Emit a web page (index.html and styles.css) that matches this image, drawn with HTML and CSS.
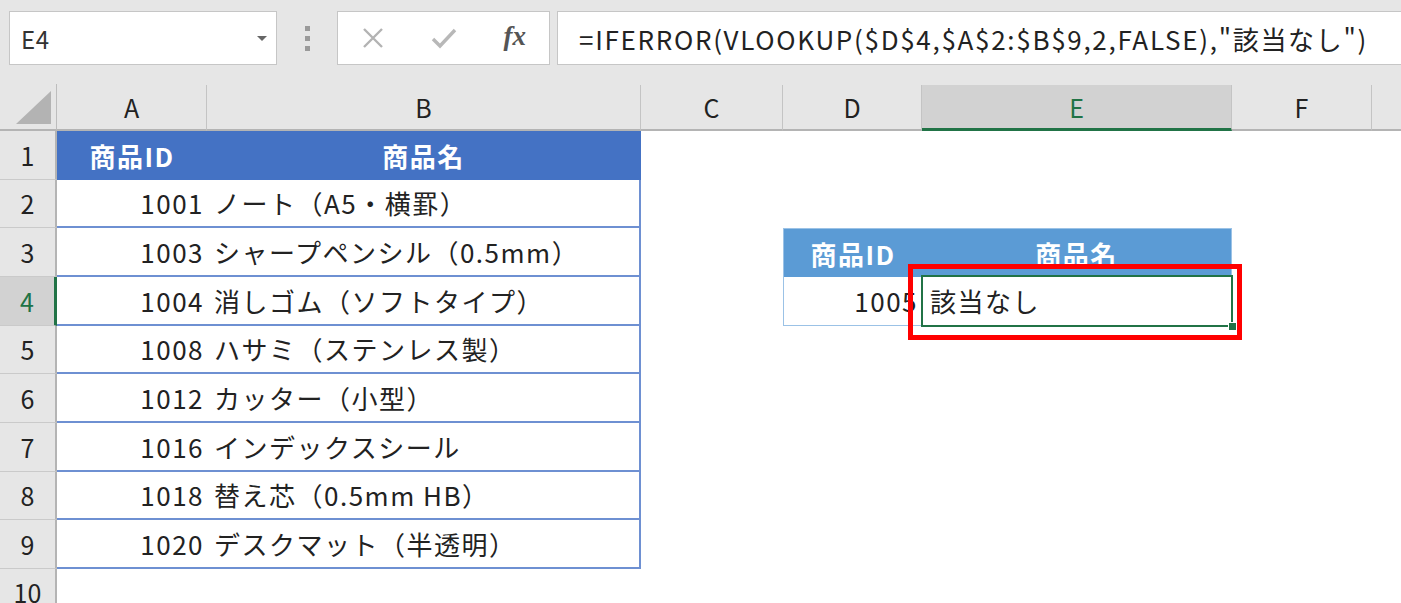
FILE: index.html
```html
<!DOCTYPE html>
<html lang="ja">
<head>
<meta charset="utf-8">
<title>Excel</title>
<link rel="stylesheet" href="styles.css">
</head>
<body>
<div class="app">
  <div class="toolbar">
    <div class="namebox"><span class="name">E4</span><span class="dd"></span></div>
    <div class="grip"><i></i><i></i><i></i></div>
    <div class="btns">
      <svg class="ico" width="24" height="24" viewBox="0 0 24 24"><path d="M3 3 L21 21 M21 3 L3 21" stroke="#b3b3b3" stroke-width="2.4" fill="none"/></svg>
      <svg class="ico" width="26" height="24" viewBox="0 0 26 24"><path d="M2 13 L9 20 L24 4" stroke="#b8b8b8" stroke-width="3.4" fill="none"/></svg>
      <span class="fx">fx</span>
    </div>
    <div class="formula">=IFERROR(VLOOKUP($D$4,$A$2:$B$9,2,FALSE),"該当なし")</div>
  </div>
  <div class="sheet">
    <div class="row colhdr">
      <div class="corner"><span class="tri"></span></div>
      <div class="ch">A</div><div class="ch">B</div><div class="ch">C</div><div class="ch">D</div><div class="ch sel">E</div><div class="ch">F</div><div class="ch last"></div>
    </div>
    <div class="row">
      <div class="rh">1</div>
      <div class="th">商品ID</div><div class="th">商品名</div>
      <div></div><div></div><div></div><div></div><div></div>
    </div>
    <div class="row">
      <div class="rh">2</div>
      <div class="id">1001</div><div class="nm">ノート（A5・横罫）</div>
      <div></div><div></div><div></div><div></div><div></div>
    </div>
    <div class="row">
      <div class="rh">3</div>
      <div class="id">1003</div><div class="nm">シャープペンシル（0.5mm）</div>
      <div></div><div class="th2 d">商品ID</div><div class="th2 e">商品名</div><div></div><div></div>
    </div>
    <div class="row">
      <div class="rh sel">4</div>
      <div class="id">1004</div><div class="nm">消しゴム（ソフトタイプ）</div>
      <div></div><div class="v2">1005</div><div class="res">該当なし<span class="selbox"><span class="handle"></span></span><span class="redbox"></span></div><div></div><div></div>
    </div>
    <div class="row">
      <div class="rh">5</div>
      <div class="id">1008</div><div class="nm">ハサミ（ステンレス製）</div>
      <div></div><div></div><div></div><div></div><div></div>
    </div>
    <div class="row">
      <div class="rh">6</div>
      <div class="id">1012</div><div class="nm">カッター（小型）</div>
      <div></div><div></div><div></div><div></div><div></div>
    </div>
    <div class="row">
      <div class="rh">7</div>
      <div class="id">1016</div><div class="nm">インデックスシール</div>
      <div></div><div></div><div></div><div></div><div></div>
    </div>
    <div class="row">
      <div class="rh">8</div>
      <div class="id">1018</div><div class="nm">替え芯（0.5mm HB）</div>
      <div></div><div></div><div></div><div></div><div></div>
    </div>
    <div class="row">
      <div class="rh">9</div>
      <div class="id">1020</div><div class="nm">デスクマット（半透明）</div>
      <div></div><div></div><div></div><div></div><div></div>
    </div>
    <div class="row tail">
      <div class="rh">10</div>
      <div></div><div></div><div></div><div></div><div></div><div></div><div></div>
    </div>
  </div>
</div>
</body>
</html>
```
FILE: styles.css
```css
* { box-sizing: border-box; }
html, body { margin: 0; padding: 0; }
body {
  width: 1401px;
  height: 603px;
  overflow: hidden;
  background: #e6e6e6;
  font-family: "Noto Sans CJK JP", "Noto Sans", sans-serif;
  color: #222;
}
.app { display: flex; flex-direction: column; height: 603px; }

/* toolbar */
.toolbar {
  height: 84px;
  flex: none;
  display: flex;
  align-items: flex-start;
  padding: 11px 0 0 9px;
  background: #e6e6e6;
}
.namebox {
  width: 268px;
  height: 54px;
  background: #fff;
  border: 1px solid #c6c6c6;
  display: flex;
  align-items: center;
  justify-content: space-between;
  padding: 0 9px 0 11px;
}
.name { font-size: 24px; color: #333; letter-spacing: 0.5px; }
.dd {
  width: 0; height: 0;
  border-left: 5px solid transparent;
  border-right: 5px solid transparent;
  border-top: 5px solid #666;
}
.grip {
  width: 60px;
  height: 54px;
  display: flex;
  flex-direction: column;
  align-items: center;
  justify-content: center;
  gap: 5px;
}
.grip i { display: block; width: 5px; height: 5px; background: #9a9a9a; }
.btns {
  width: 213px;
  height: 54px;
  background: #fff;
  border: 1px solid #c6c6c6;
  display: flex;
  align-items: center;
  padding: 0 23px 0 23px;
  justify-content: space-between;
}
.fx {
  font-family: "Liberation Serif", serif;
  font-style: italic;
  font-weight: bold;
  font-size: 27px;
  color: #555;
  margin-top: -4px;
}
.formula {
  margin-left: 7px;
  flex: 1;
  height: 54px;
  background: #fff;
  border: 1px solid #c6c6c6;
  border-right: none;
  display: flex;
  align-items: center;
  padding-left: 21px;
  font-size: 26px;
  letter-spacing: 1.7px;
  color: #222;
  white-space: nowrap;
  overflow: hidden;
}

/* sheet */
.sheet { flex: 1; display: flex; flex-direction: column; background: #fff; }
.row {
  display: grid;
  grid-template-columns: 57px 150px 434px 142px 139px 310px 140px 1fr;
  height: 48.67px;
  flex: none;
  font-size: 26px;
  letter-spacing: 1.5px;
}
.row > div { display: flex; align-items: center; min-width: 0; position: relative; }
.row.tail { flex: 1; height: auto; }
.colhdr { height: 47px; background: #e6e6e6; letter-spacing: 0; }
.corner {
  border-right: 1px solid #bdbdbd;
  border-bottom: 2px solid #b4b4b4;
  justify-content: flex-end;
  align-items: flex-end !important;
  padding: 0 5px 5px 0;
}
.tri {
  width: 0; height: 0;
  border-left: 35px solid transparent;
  border-bottom: 33px solid #b3b3b3;
}
.ch {
  justify-content: center;
  border-right: 1px solid #c4c4c4;
  border-bottom: 2px solid #b4b4b4;
  font-size: 25px;
  color: #222;
  margin-top: 1px;
}
.ch.last { border-right: none; }
.ch.sel {
  background: #d2d2d2;
  color: #217346;
  border-bottom: 3px solid #217346;
}
.rh {
  background: #e6e6e6;
  justify-content: center;
  border-right: 2px solid #b4b4b4;
  border-bottom: 1px solid #cacaca;
  font-size: 25px;
  letter-spacing: 0;
  color: #222;
}
.rh.sel {
  background: #d2d2d2;
  color: #217346;
  border-right: 3px solid #217346;
}
.tail .rh { align-items: flex-start; padding-top: 5px; border-bottom: none; }

.th {
  background: #4472c4;
  color: #fff;
  font-weight: bold;
  justify-content: center;
}
.th:nth-child(3) { border-right: 1px solid #4472c4; }
.id {
  justify-content: flex-end;
  padding-right: 3px;
  border-bottom: 2px solid #6e90d2;
}
.nm {
  padding-left: 7px;
  border-bottom: 2px solid #6e90d2;
  border-right: 2px solid #6e90d2;
  white-space: nowrap;
}
.th2 {
  background: #5b9bd5;
  color: #fff;
  font-weight: bold;
  justify-content: center;
  border-top: 1px solid #9bc2e6;
}
.th2.d { border-left: 1px solid #9bc2e6; }
.th2.e { border-right: 1px solid #9bc2e6; }
.v2 {
  justify-content: flex-end;
  padding-right: 4px;
  border-left: 1px solid #9bc2e6;
  border-bottom: 1px solid #9bc2e6;
}
.res {
  padding-left: 8px;
  border-bottom: 1px solid #9bc2e6;
}
.selbox {
  position: absolute;
  left: -1px; top: -2px; right: -1px; bottom: -2px;
  border: 2px solid #217346;
}
.handle {
  position: absolute;
  right: -6px; bottom: -6px;
  width: 9px; height: 9px;
  background: #217346;
  border: 1px solid #fff;
}
.redbox {
  position: absolute;
  left: -14px; top: -13px; right: -10px; bottom: -15px;
  border: 5px solid #ff0000;
}
```
